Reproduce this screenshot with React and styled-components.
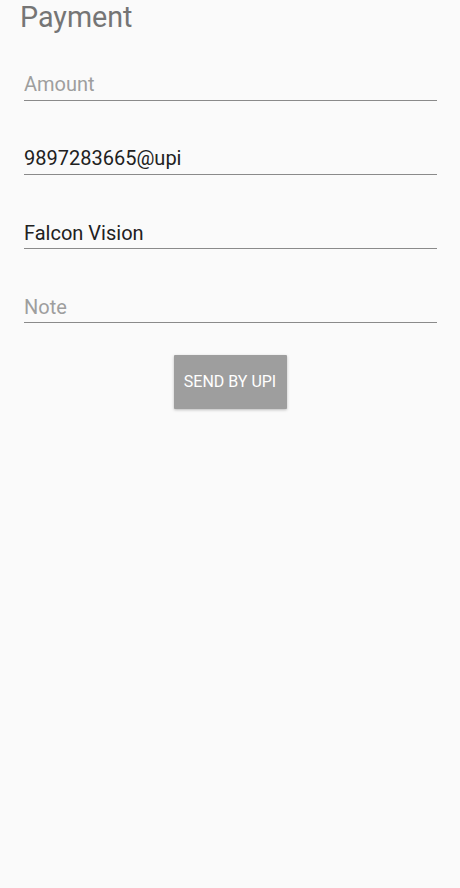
import React from "react";
import styled, { createGlobalStyle } from "styled-components";

const Global = createGlobalStyle`
  html, body { margin: 0; padding: 0; background: #fafafa; }
  body { font-family: Roboto, "Noto Sans", sans-serif; }
  * { box-sizing: border-box; }
`;

const Screen = styled.div`
  min-height: 888px;
  background: #fafafa;
  display: flex;
  flex-direction: column;
`;

const Title = styled.h1`
  margin: 0 0 0 20px;
  font-size: 28.7px;
  font-weight: 400;
  line-height: 34px;
  color: #757575;
`;

const Form = styled.form`
  display: flex;
  flex-direction: column;
  gap: 47.3px;
  margin: 39.5px 23px 0 24px;
`;

const Field = styled.input`
  display: block;
  width: 100%;
  height: 27px;
  margin: 0;
  padding: 0 0 5px 0;
  border: none;
  border-bottom: 1px solid #8a8a8a;
  background: transparent;
  font-family: Roboto, "Noto Sans", sans-serif;
  font-size: 20px;
  line-height: 21px;
  color: #212121;
  outline: none;
  &::placeholder { color: #9e9e9e; opacity: 1; }
`;

const Actions = styled.div`
  display: flex;
  justify-content: center;
  margin-top: 31.5px;
`;

const Button = styled.button`
  width: 113px;
  height: 54px;
  border: none;
  border-radius: 1px;
  background: #9e9e9e;
  color: #ffffff;
  font-family: Roboto, "Noto Sans", sans-serif;
  font-size: 16px;
  font-weight: 400;
  text-transform: uppercase;
  box-shadow: 0 1px 3px rgba(0, 0, 0, 0.25);
  padding: 0;
`;

export default function App() {
  return (
    <>
      <Global />
      <Screen>
        <Title>Payment</Title>
        <Form onSubmit={(e) => e.preventDefault()}>
          <Field placeholder="Amount" readOnly />
          <Field defaultValue="9897283665@upi" readOnly />
          <Field defaultValue="Falcon Vision" readOnly />
          <Field placeholder="Note" readOnly />
        </Form>
        <Actions>
          <Button type="button">Send by UPI</Button>
        </Actions>
      </Screen>
    </>
  );
}
